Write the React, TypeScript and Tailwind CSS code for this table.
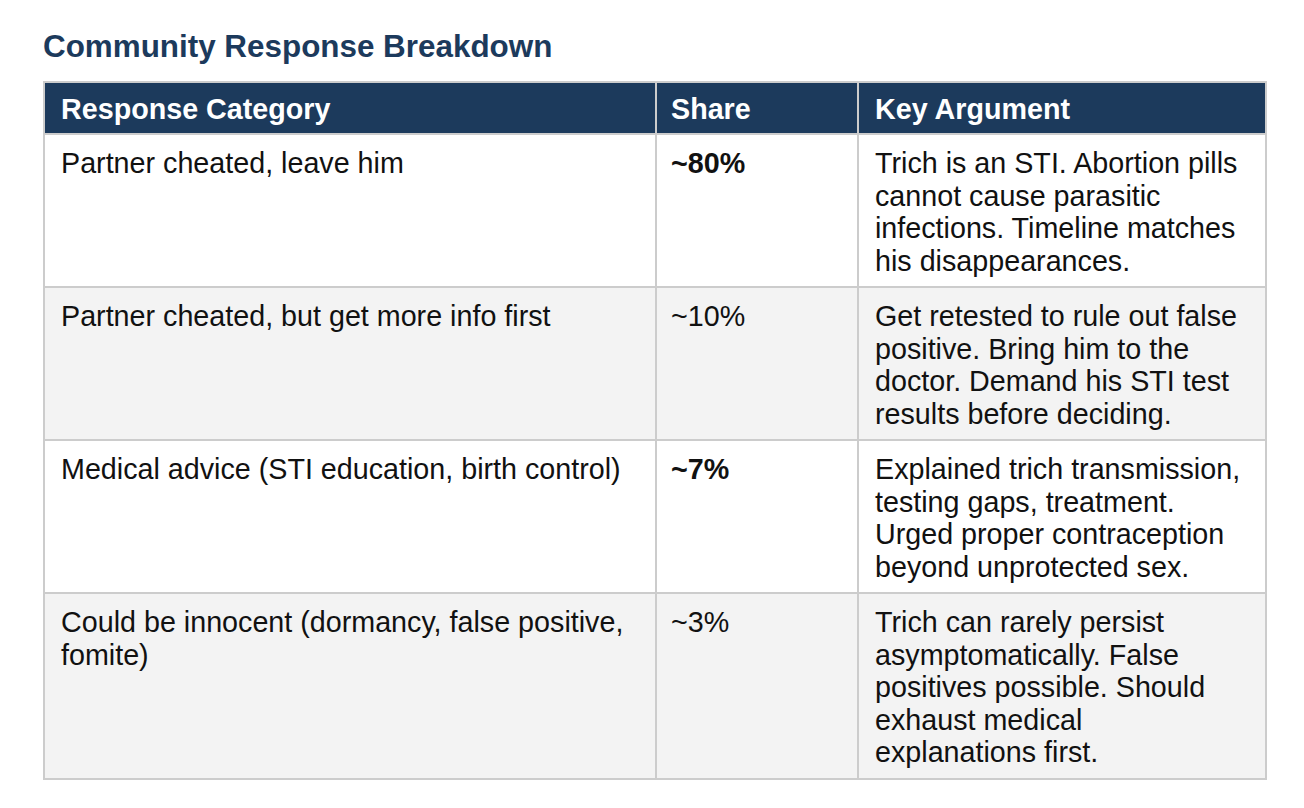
import React from 'react';

const rows = [
  {
    category: "Partner cheated, leave him",
    share: "~80%",
    strong: true,
    argument: "Trich is an STI. Abortion pills cannot cause parasitic infections. Timeline matches his disappearances.",
  },
  {
    category: "Partner cheated, but get more info first",
    share: "~10%",
    strong: false,
    argument: "Get retested to rule out false positive. Bring him to the doctor. Demand his STI test results before deciding.",
  },
  {
    category: "Medical advice (STI education, birth control)",
    share: "~7%",
    strong: true,
    argument: "Explained trich transmission, testing gaps, treatment. Urged proper contraception beyond unprotected sex.",
  },
  {
    category: "Could be innocent (dormancy, false positive, fomite)",
    share: "~3%",
    strong: false,
    argument: "Trich can rarely persist asymptomatically. False positives possible. Should exhaust medical explanations first.",
  },
];

const App: React.FC = () => {
  return (
    <div className="min-h-screen bg-white pl-[43px] pt-[27px] font-['Liberation_Sans',Arial,sans-serif] text-[#111]">
      <h2 className="text-[31.4px] font-bold leading-[40px] text-[#1c3a5c] mb-[14px]">Community Response Breakdown</h2>

      <table className="w-[1222px] table-fixed border-collapse border-2 border-[#cccccc] text-[28.7px] leading-[32.5px]">
        <colgroup>
          <col className="w-[612px]" />
          <col className="w-[202px]" />
          <col className="w-[408px]" />
        </colgroup>
        <thead>
          <tr className="bg-[#1c3a5c] text-white font-bold text-left">
            <th className="border-2 border-[#cccccc] px-[16px] pt-[10px] pb-[8px] leading-[32px]">Response Category</th>
            <th className="border-2 border-[#cccccc] px-[14px] pt-[10px] pb-[8px] leading-[32px]">Share</th>
            <th className="border-2 border-[#cccccc] px-[16px] pt-[10px] pb-[8px] leading-[32px]">Key Argument</th>
          </tr>
        </thead>
        <tbody>
          {rows.map((r, i) => (
            <tr key={i} className={i % 2 === 1 ? "bg-[#f3f3f3]" : "bg-white"}>
              <td className="border-2 border-[#cccccc] px-[16px] pt-[12px] pb-[9px] align-top">{r.category}</td>
              <td className={"border-2 border-[#cccccc] px-[14px] pt-[12px] pb-[9px] align-top " + (r.strong ? "font-bold" : "")}>{r.share}</td>
              <td className="border-2 border-[#cccccc] px-[16px] pt-[12px] pb-[9px] align-top">{r.argument}</td>
            </tr>
          ))}
        </tbody>
      </table>
    </div>
  );
};

export default App;
